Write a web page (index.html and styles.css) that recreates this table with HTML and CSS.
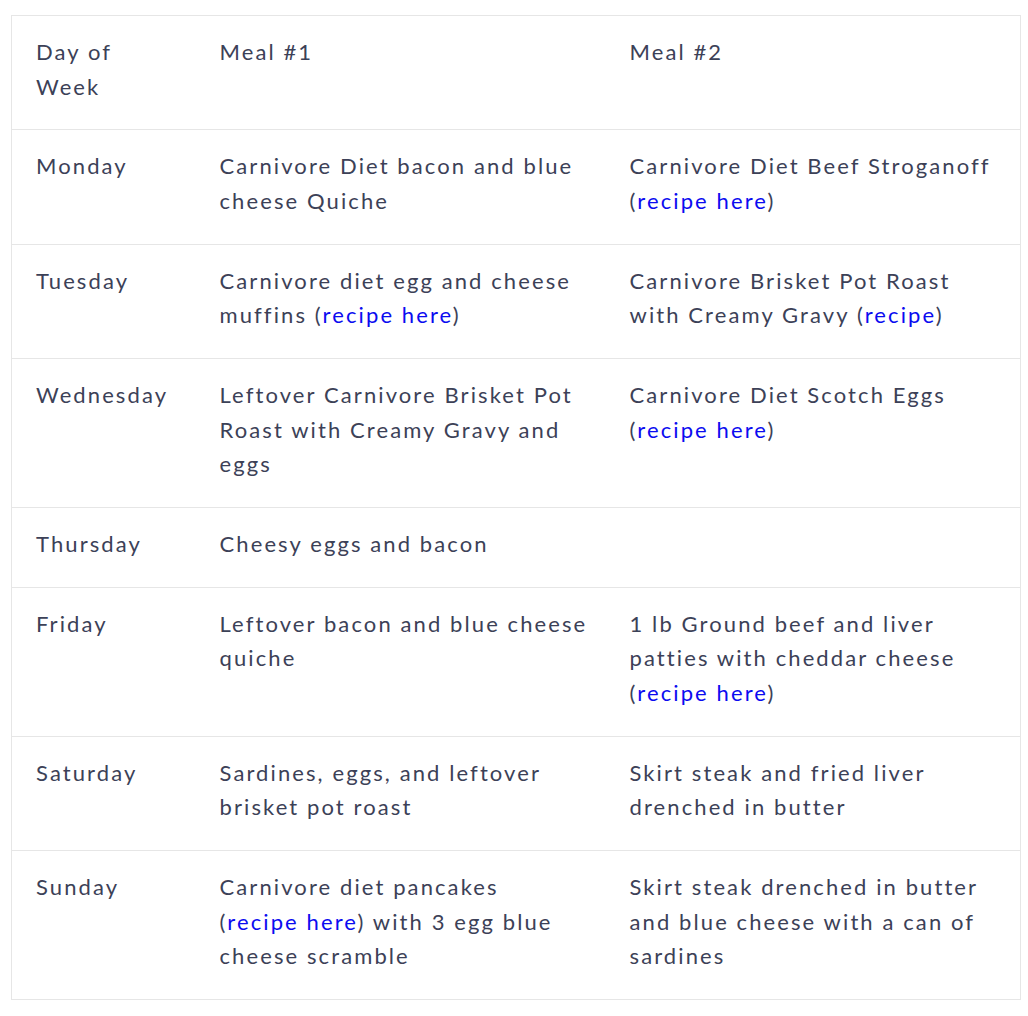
FILE: index.html
```html
<!DOCTYPE html>
<html>
<head>
<meta charset="utf-8">
<link rel="stylesheet" href="styles.css">
</head>
<body>
<div class="wrap">
<table class="plan">
<colgroup><col class="c1"><col class="c2"><col class="c3"></colgroup>
<tr><td>Day of Week</td><td>Meal #1</td><td>Meal #2</td></tr>
<tr><td>Monday</td><td>Carnivore Diet bacon and blue cheese Quiche</td><td>Carnivore Diet Beef Stroganoff <span class="ref">(<a href="#">recipe here</a>)</span></td></tr>
<tr><td>Tuesday</td><td>Carnivore diet egg and cheese muffins <span class="ref">(<a href="#">recipe here</a>)</span></td><td>Carnivore Brisket Pot Roast with Creamy Gravy <span class="ref">(<a href="#">recipe</a>)</span></td></tr>
<tr><td>Wednesday</td><td>Leftover Carnivore Brisket Pot Roast with Creamy Gravy and eggs</td><td>Carnivore Diet Scotch Eggs <span class="ref">(<a href="#">recipe here</a>)</span></td></tr>
<tr><td>Thursday</td><td>Cheesy eggs and bacon</td><td></td></tr>
<tr><td>Friday</td><td>Leftover bacon and blue cheese quiche</td><td>1 lb Ground beef and liver patties with cheddar cheese <span class="ref">(<a href="#">recipe here</a>)</span></td></tr>
<tr><td>Saturday</td><td>Sardines, eggs, and leftover brisket pot roast</td><td>Skirt steak and fried liver drenched in butter</td></tr>
<tr><td>Sunday</td><td>Carnivore diet pancakes <span class="ref">(<a href="#">recipe here</a>)</span> with 3 egg blue cheese scramble</td><td>Skirt steak drenched in butter and blue cheese with a can of sardines</td></tr>
</table>
</div>
</body>
</html>
```
FILE: styles.css
```css
html, body { margin: 0; padding: 0; background: #fff; }
.wrap { padding: 15px 8px 0 11px; }
.plan {
  width: 1009px;
  border-collapse: collapse;
  table-layout: fixed;
  border: 1px solid #e6e6e6;
  font-family: "Lato", "Liberation Sans", sans-serif;
  font-size: 22px;
  line-height: 34.5px;
  color: #3c4157;
  letter-spacing: 2.1px;
}
.c1 { width: 184px; }
.c2 { width: 410px; }
.c3 { width: 415px; }
.plan td {
  vertical-align: top;
  padding: 19px 16px 25.4px 24px;
  border-top: 1px solid #e6e6e6;
  text-align: left;
}
.ref { white-space: nowrap; }
.plan a { color: #0b0bf0; text-decoration: none; }
```
